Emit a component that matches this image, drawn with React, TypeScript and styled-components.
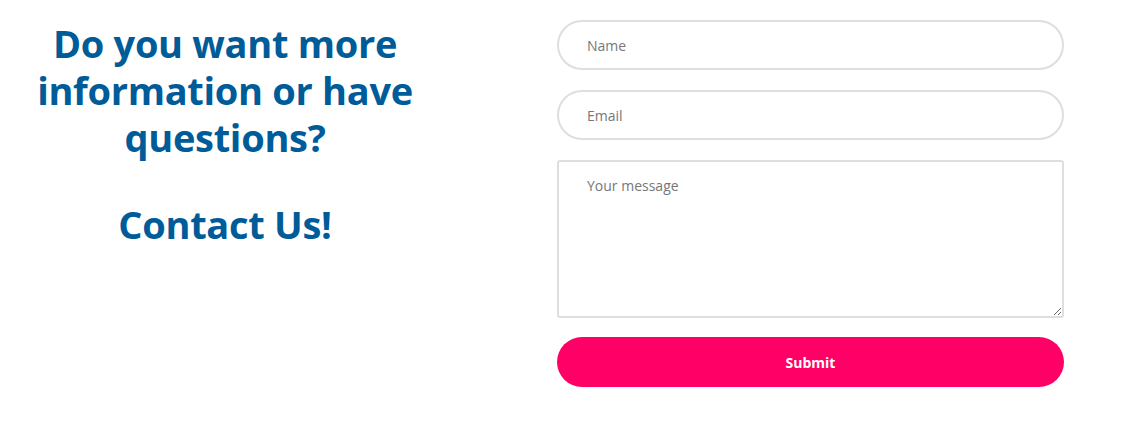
import React from "react";
import styled, { createGlobalStyle } from "styled-components";

const Global = createGlobalStyle`
  html, body { margin: 0; padding: 0; background: #fff; }
  body { font-family: "Open Sans", "Liberation Sans", sans-serif; }
  * { box-sizing: border-box; }
`;

const Page = styled.div`
  display: grid;
  grid-template-columns: 450px 507px;
  column-gap: 107px;
  padding: 20px 0 0 0;
  width: 1124px;
  height: 444px;
`;

const Intro = styled.div`
  text-align: center;
  color: #005b99;
`;

const Heading = styled.h2`
  margin: 0;
  font-family: "Open Sans", sans-serif;
  font-weight: 700;
  font-size: 38px;
  line-height: 47px;
  letter-spacing: -0.3px;
  & + & { margin-top: 40px; }
`;

const Form = styled.form`
  display: flex;
  flex-direction: column;
  gap: 20px;
`;

const Field = styled.input`
  width: 100%;
  height: 50px;
  border: 2px solid #dedede;
  border-radius: 25px;
  padding: 0 28px;
  font-family: "Open Sans", sans-serif;
  font-size: 14px;
  color: #333;
  outline: none;
  &::placeholder { color: #777; }
`;

const Message = styled.textarea`
  width: 100%;
  height: 158px;
  border: 2px solid #dedede;
  border-radius: 3px;
  padding: 14px 28px;
  font-family: "Open Sans", sans-serif;
  font-size: 14px;
  color: #333;
  resize: vertical;
  outline: none;
  display: block;
  &::placeholder { color: #777; }
`;

const Submit = styled.button`
  margin-top: -1px;
  width: 100%;
  height: 50px;
  border: none;
  border-radius: 25px;
  background: #ff0066;
  color: #fff;
  font-family: "Open Sans", sans-serif;
  font-weight: 700;
  font-size: 14px;
  cursor: pointer;
`;

export default function App() {
  return (
    <>
      <Global />
      <Page>
        <Intro>
          <Heading>Do you want more information or have questions?</Heading>
          <Heading>Contact Us!</Heading>
        </Intro>
        <Form onSubmit={(e) => e.preventDefault()}>
          <Field type="text" placeholder="Name" />
          <Field type="email" placeholder="Email" />
          <Message placeholder="Your message" />
          <Submit type="submit">Submit</Submit>
        </Form>
      </Page>
    </>
  );
}
